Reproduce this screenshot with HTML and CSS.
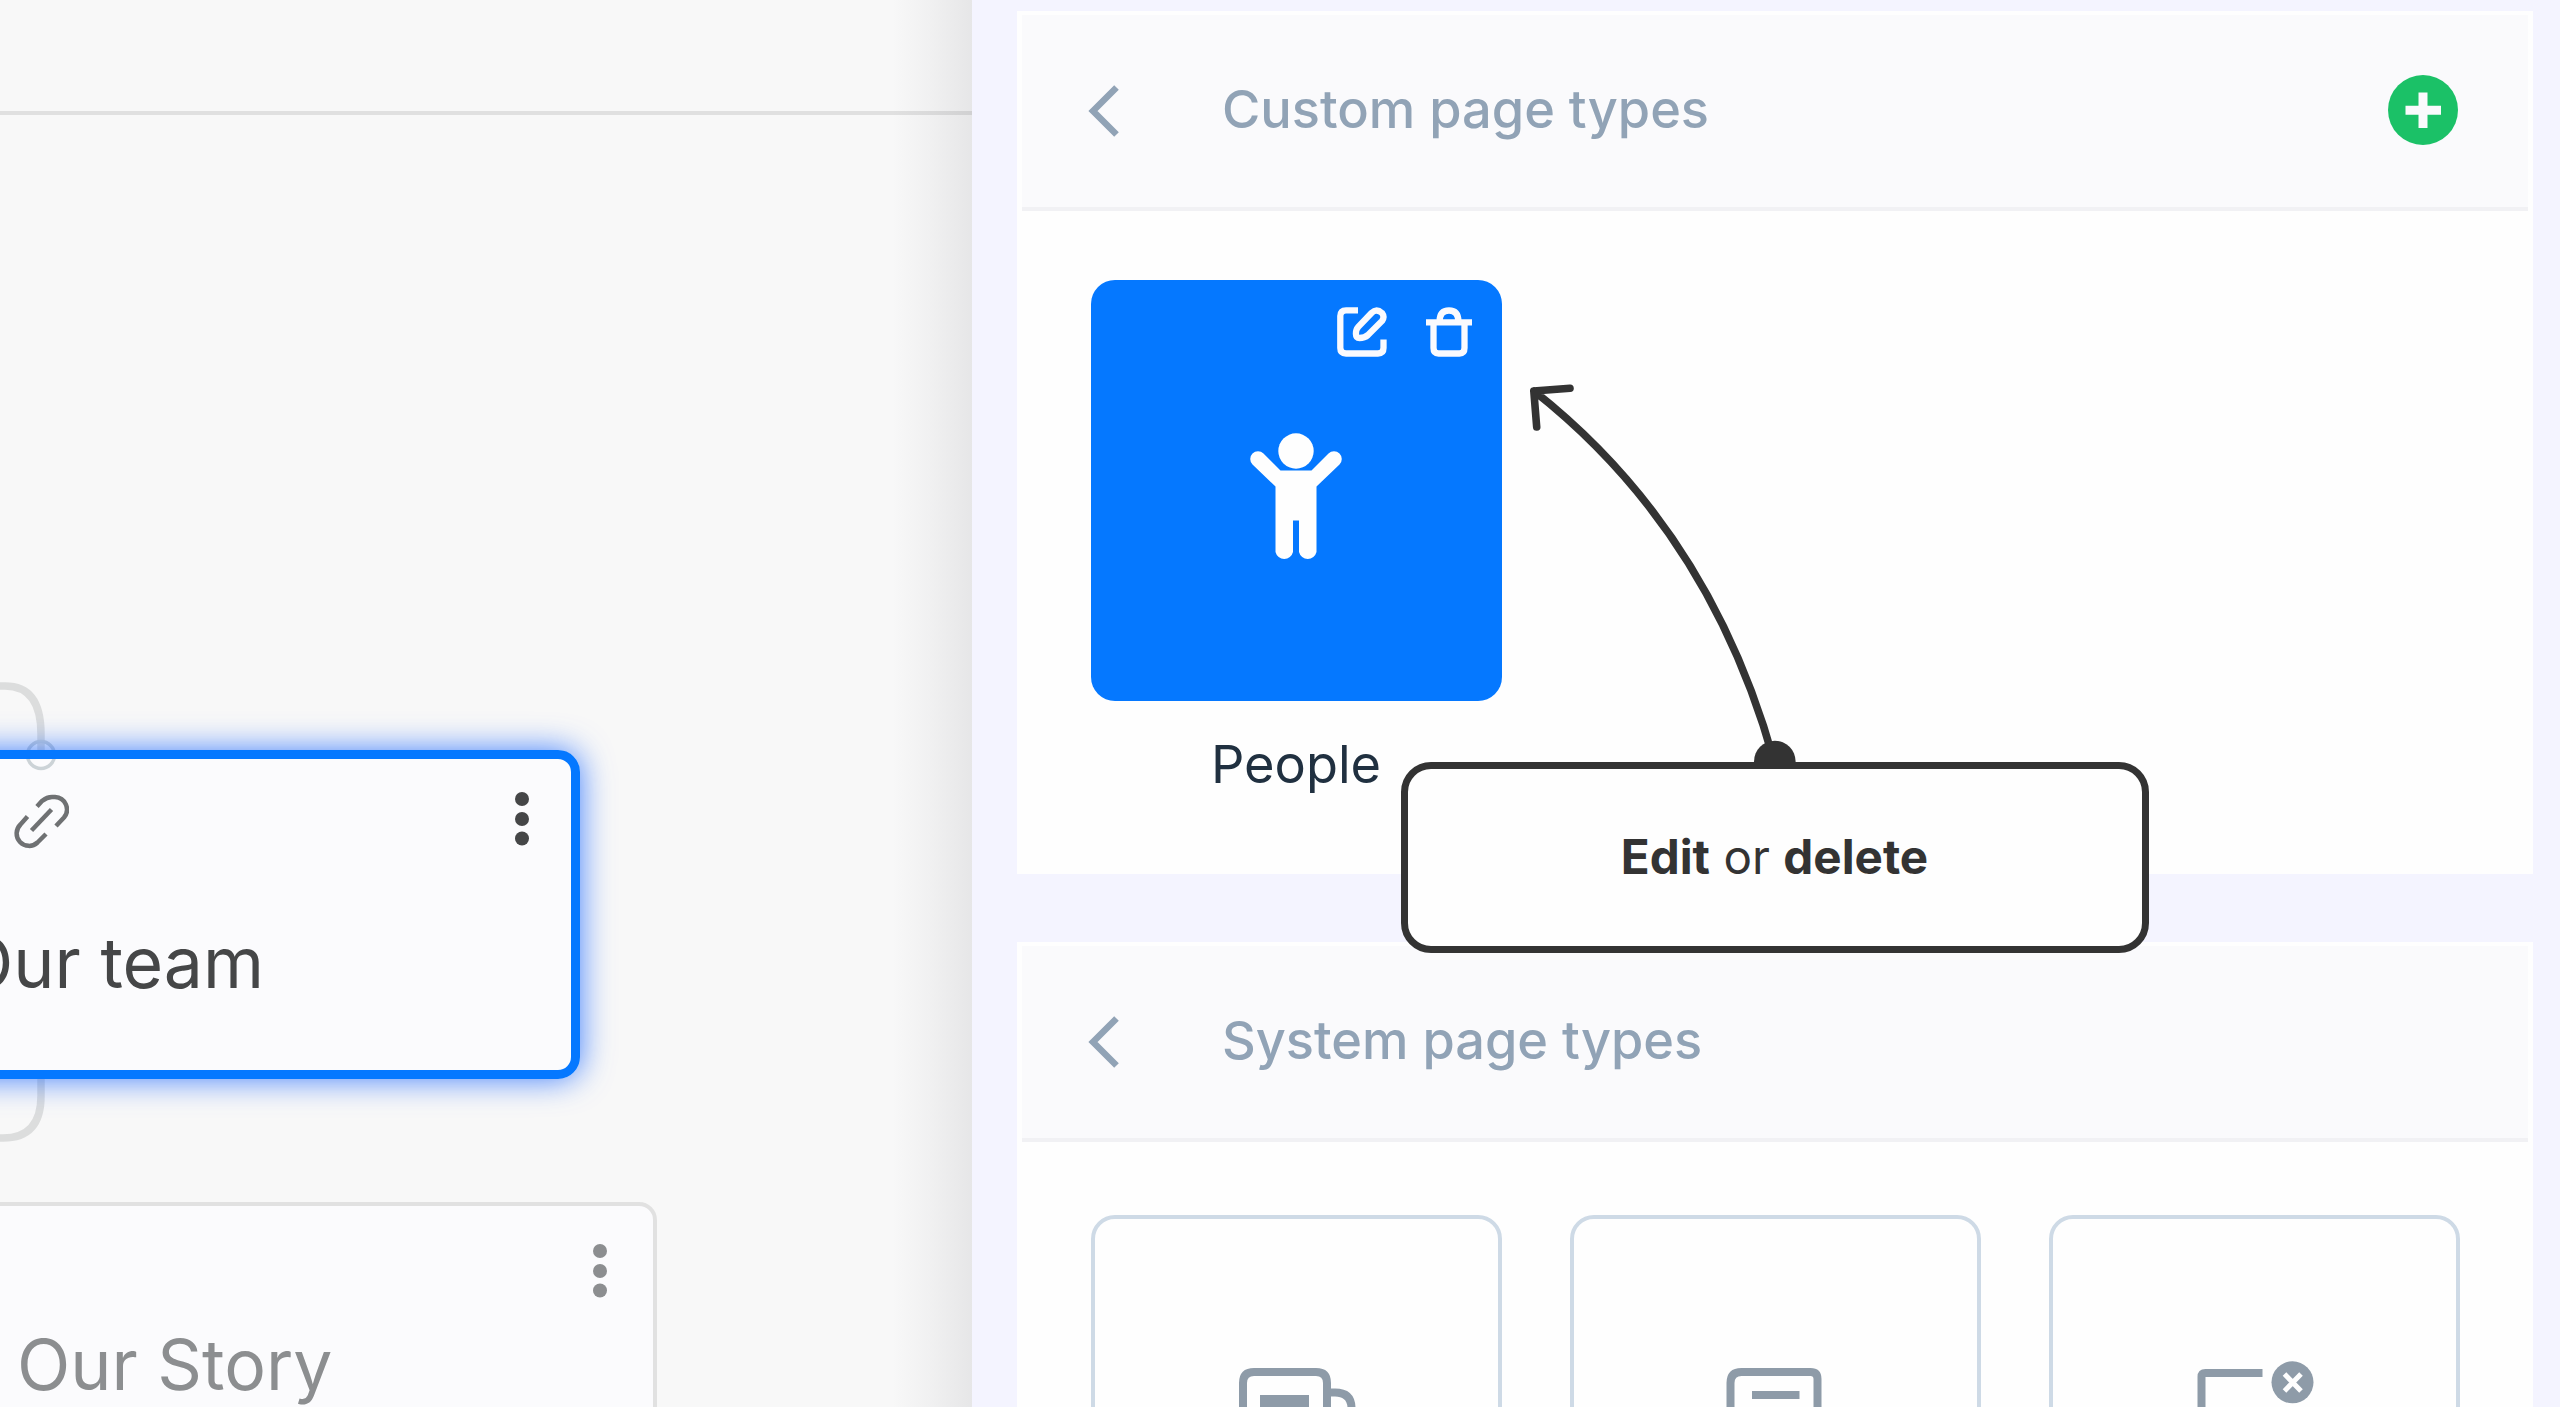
FILE: index.html
```html
<!DOCTYPE html>
<html lang="en">
<head>
  <meta charset="UTF-8" />
  <meta name="viewport" content="width=device-width, initial-scale=1.0"/>
  <title>Page types</title>
  <link rel="stylesheet" href="styles.css">
</head>
<body>
  <div class="app">
    <main class="canvas">
      <div class="canvas-bar"></div>

      <!-- lines between the nodes -->
      <svg class="connectors" width="120" height="500" viewBox="0 660 120 500">
        <path d="M-10 686H5Q41 686 41 734V760M41 1070V1096Q41 1138 3 1138H-10" />
      </svg>

      <div class="node node-active">
        <svg class="node-port" width="36" height="36" viewBox="0 0 36 36">
          <circle cx="18" cy="18" r="13.5" />
        </svg>
        <svg class="link-icon" width="56" height="56" viewBox="0 0 56 56">
          <path d="M24 13.500l5-5.500q5-4 10-4h3a12.500 12.500 0 0 1 9 20.500l-8 8.500" />
          <path d="M14.500 23.500l-7 8a12 12 0 0 0 17 18l8.500-8.500" />
          <path d="M18.500 37.500l20-21" />
        </svg>
        <svg class="dots" width="16" height="56" viewBox="0 0 16 56">
          <circle cx="8" cy="8" r="7" />
          <circle cx="8" cy="28" r="7" />
          <circle cx="8" cy="47.500" r="7" />
        </svg>
        <span class="node-title">Our team</span>
      </div>

      <div class="node node-child">
        <svg class="dots" width="16" height="56" viewBox="0 0 16 56">
          <circle cx="8" cy="8" r="7" />
          <circle cx="8" cy="28" r="7" />
          <circle cx="8" cy="47.500" r="7" />
        </svg>
        <span class="node-title">Our Story</span>
      </div>
    </main>

    <aside class="sidebar">
      <section class="panel panel-custom">
        <header class="panel-header">
          <svg class="back" width="32" height="52" viewBox="0 0 32 52">
            <path d="M28.500 2.500L5 26l23.500 23.500" />
          </svg>
          <h2>Custom page types</h2>
          <svg class="add" width="70" height="70" viewBox="0 0 70 70">
            <circle cx="35" cy="35" r="35" />
            <path d="M35 17.500v35.500M17.500 35.200h35.500" />
          </svg>
        </header>
        <div class="cards">
          <div class="card-item">
            <div class="card card-blue">
              <div class="card-actions">
                <svg width="50" height="50" viewBox="0 0 50 50">
                  <path d="M21 3.300H9Q3.300 3.300 3.300 9v32Q3.300 46.500 9 46.500h32Q46.500 46.500 46.500 41V32.500" />
                  <path d="M34.500 6l-13 13.500Q18.500 23 19 27.500q0 3.500 3.500 3.500q5 0 8.500-3L45 14q3-4 0-8Q39.500 1 34.500 6z" />
                </svg>
                <svg width="48" height="50" viewBox="0 0 48 50">
                  <path d="M1 15.300h46M8.500 15v26q0 5.500 5 5.500h21q5 0 5-5.500V15M14.500 15q0-11.500 9.500-11.500T33.500 15" />
                </svg>
              </div>
              <svg class="person" width="92" height="128" viewBox="0 0 92 128">
                <circle cx="46" cy="18" r="17.700" />
                <path d="M30.500 37.500L13.500 20.500a7.700 7.700 0 0 0-11 11L25.500 53.500V119a9 9 0 0 0 17.500 0V87.500h6V119a9 9 0 0 0 17.500 0V53.500L89.500 31.500a7.700 7.700 0 0 0-11-11L61.500 37.500z" />
              </svg>
            </div>
            <span class="card-label">People</span>
          </div>
        </div>
      </section>

      <section class="panel panel-system">
        <header class="panel-header">
          <svg class="back" width="32" height="52" viewBox="0 0 32 52">
            <path d="M28.500 2.500L5 26l23.500 23.500" />
          </svg>
          <h2>System page types</h2>
        </header>
        <div class="cards">
          <div class="card">
            <svg class="type-icon" width="120" height="110" viewBox="0 0 120 110">
              <path d="M7 100V20q0-11 11-11h62q11 0 11 11v80M91 29.500h8q16.500 0 16.500 16V100" />
              <rect x="24" y="32" width="49" height="40" />
            </svg>
          </div>
          <div class="card">
            <svg class="type-icon" width="120" height="110" viewBox="0 0 120 110">
              <path d="M15.500 100V20q0-11 11-11h69q7 0 7 7v84M37 32h47.500" />
            </svg>
          </div>
          <div class="card">
            <svg class="type-icon" width="120" height="110" viewBox="0 0 120 110">
              <path d="M7.500 100V14q0-4 4-4H68.500M33 49h31" />
              <circle cx="98.500" cy="19.300" r="21" />
              <path class="cross" d="M90.500 11l16.500 17M107 11L90.500 28" />
            </svg>
          </div>
        </div>
      </section>
    </aside>

    <!-- hint over the panels -->
    <svg class="arrow" width="280" height="400" viewBox="1520 370 280 400">
      <path d="M1774 761Q1710 530 1534 391M1570 388.200L1533.800 391l2.900 36" />
      <circle cx="1774.800" cy="761.500" r="20.800" />
    </svg>
    <div class="hint"><p><b>Edit</b> or <b>delete</b></p></div>
  </div>
</body>
</html>
```

FILE: styles.css
```css
* {
  box-sizing: border-box;
}
body {
  margin: 0;
  font-family: Inter, "Liberation Sans", sans-serif;
  background: #f8f8f8;
}
.app {
  position: relative;
  display: flex;
  width: 2560px;
  height: 1407px;
  overflow: hidden;
}
svg {
  display: block;
  flex: none;
}

/* canvas */
.canvas {
  position: relative;
  width: 972px;
  flex: none;
  overflow: hidden;
}
.canvas::after {
  content: "";
  position: absolute;
  top: 0;
  right: 0;
  bottom: 0;
  width: 80px;
  background: linear-gradient(to right, rgba(50, 50, 65, 0), rgba(50, 50, 65, 0.035) 45%, rgba(50, 50, 65, 0.09));
}
.canvas-bar {
  height: 115px;
  border-bottom: 4px solid #e0e0e0;
}
.connectors {
  position: absolute;
  left: 0;
  top: 660px;
  fill: none;
  stroke: #dcdddd;
  stroke-width: 7.5;
}
.node {
  position: absolute;
  background: #fbfbfd;
}
.node-active {
  left: -60px;
  top: 750px;
  width: 640px;
  height: 329px;
  border-radius: 22px;
  color: #454647;
}
.node-active::after {
  content: "";
  position: absolute;
  inset: 0;
  border: 9px solid #0578ff;
  border-radius: 22px;
  box-shadow: 0 0 32px rgba(0, 85, 255, 0.75);
}
.node-child {
  left: -60px;
  top: 1202px;
  width: 716.5px;
  height: 330px;
  border: 4.5px solid #e1e1e1;
  border-radius: 18px;
  color: #8c8e90;
}
.node-title {
  position: absolute;
  font-size: 69.7px;
  line-height: 84px;
  white-space: nowrap;
}
.node-active .node-title {
  right: 316px;
  top: 171px;
}
.node-child .node-title {
  left: 73px;
  top: 117px;
}
.node-port {
  position: absolute;
  left: 83px;
  top: -13px;
  fill: none;
  stroke: #ccd3d7;
  stroke-width: 3.5;
}
.link-icon {
  position: absolute;
  left: 73px;
  top: 43px;
  fill: none;
  stroke: #6f7173;
  stroke-width: 4.5;
}
.dots {
  position: absolute;
  fill: currentColor;
}
.node-active .dots {
  right: 50px;
  top: 41px;
}
.node-child .dots {
  right: 45px;
  top: 37px;
}

/* sidebar */
.sidebar {
  flex: 1;
  display: flex;
  flex-direction: column;
  gap: 68px;
  padding: 11px 28px 0 45px;
  background: #f4f4ff;
}
.panel {
  flex: none;
  padding: 4px 5px;
  background: #fefefe;
}
.panel-custom {
  height: 863px;
}
.panel-system {
  height: 600px;
}
.panel-header {
  display: flex;
  align-items: center;
  height: 196px;
  padding: 0 70px 0 66px;
  background: #fafafc;
  border-bottom: 4px solid #f1f1f4;
}
.panel-header h2 {
  margin: -4px 0 0 102px;
  font-size: 52.3px;
  font-weight: 500;
  line-height: 64px;
  color: #91a3b6;
}
.back {
  fill: none;
  stroke: #91a3b6;
  stroke-width: 6.5;
}
.add {
  margin: -2px 0 0 auto;
  fill: #1bc167;
}
.add path {
  stroke: #fafafc;
  stroke-width: 9;
}
.cards {
  display: flex;
  gap: 68px;
  padding: 69px 68.5px 0;
}
.panel-system .cards {
  padding-top: 72.5px;
}
.card-item {
  display: flex;
  flex-direction: column;
  align-items: center;
}
.card {
  display: flex;
  flex-direction: column;
  align-items: center;
  flex: none;
  width: 411px;
  height: 421px;
  border: 4.5px solid #cedae6;
  border-radius: 24px;
}
.card-blue {
  border: none;
  background: #0578ff;
}
.card-actions {
  align-self: flex-end;
  display: flex;
  gap: 38px;
  padding: 27px 29px 0 0;
  fill: none;
  stroke: #fafafe;
  stroke-width: 6.3;
}
.person {
  margin-top: 76px;
  fill: #fefefe;
}
.card-label {
  margin-top: 31px;
  font-size: 52.3px;
  line-height: 64px;
  color: #203040;
}
.type-icon {
  margin-top: 144px;
  fill: none;
  stroke: #8e9ba8;
  stroke-width: 8;
  overflow: visible;
}
.type-icon rect,
.type-icon circle {
  fill: #8e9ba8;
  stroke: none;
}
.type-icon .cross {
  stroke: #fefefe;
  stroke-width: 5;
}

/* hint */
.arrow {
  position: absolute;
  left: 1520px;
  top: 370px;
  fill: none;
  stroke: #333;
  stroke-width: 7.6;
  stroke-linecap: round;
  stroke-linejoin: round;
}
.arrow circle {
  fill: #333;
  stroke: none;
}
.hint {
  position: absolute;
  left: 1400.5px;
  top: 761.5px;
  width: 748px;
  height: 191px;
  display: flex;
  align-items: center;
  justify-content: center;
  border: 7.5px solid #333;
  border-radius: 30px;
  background: #fefefe;
  color: #333;
}
.hint p {
  margin: 0;
  font-size: 47.6px;
  line-height: 60px;
}
```
